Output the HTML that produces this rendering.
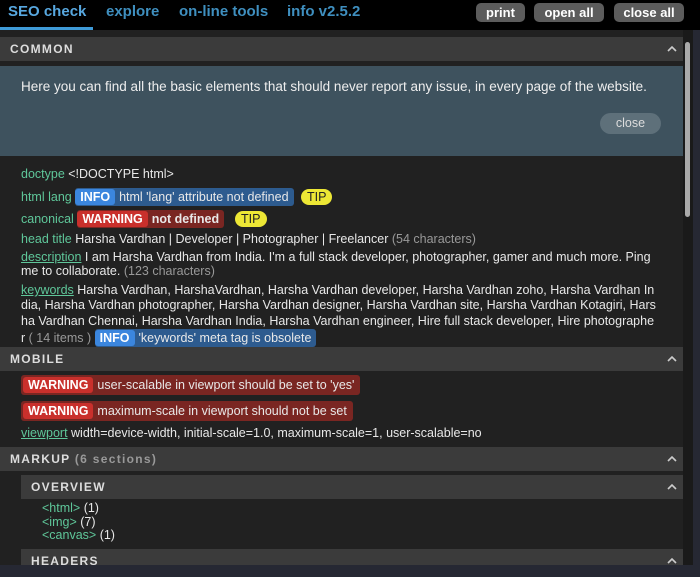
<!DOCTYPE html>
<html><head><style>
*{margin:0;padding:0;box-sizing:border-box}
body{width:700px;height:577px;overflow:hidden;background:#262833;font-family:"Liberation Sans",sans-serif;font-size:12.5px;color:#e8e8e8;position:relative}
.top{position:absolute;left:0;top:0;width:700px;height:30px;background:#000}
.tab{position:absolute;top:3px;font-size:15px;font-weight:bold;color:#3f8fbf}
.ul{position:absolute;left:0;top:27px;width:93px;height:3px;background:#3f9bd8}
.btn{position:absolute;top:3px;height:19px;background:#5c5c5c;color:#fff;border-radius:5px;font-weight:bold;font-size:13px;line-height:19px;text-align:center}
.panel{position:absolute;left:0;top:30px;width:683px;height:535px;background:#212121;overflow:hidden}
.sb{position:absolute;left:683px;top:30px;width:10px;height:535px;background:#1a1a1a}
.sb div{position:absolute;left:2px;top:12px;width:5px;height:175px;background:#aaa;border-radius:3px}
.hd{position:absolute;height:24px;background:#3b3b3b;font-size:12px;font-weight:bold;letter-spacing:1.3px;color:#ddd;line-height:24px;padding-left:10px}
.hd svg{position:absolute;right:6px;top:8px}
.row{position:absolute;left:21px;white-space:nowrap}
.g{color:#5fc79a}
.u{text-decoration:underline}
.gr{color:#999}
.b{display:inline-block;border-radius:3px;padding:1px 5px 1px 0;line-height:16px}
.bi{background:#2d5b8f}.bi i{background:#3b86de}
.bw{background:#7a2622}.bw i{background:#c9302c}
.b i{font-style:normal;font-weight:bold;display:inline-block;padding:0 5px;border-radius:3px;margin-right:4px;color:#fff}
.tip{display:inline-block;background:#ede735;color:#222;border-radius:9px;padding:0 6px;line-height:16px;margin-left:4px}
</style></head><body>
<div class="top">
<div class="tab" style="left:8px;color:#58a8e0">SEO check</div>
<div class="tab" style="left:106px">explore</div>
<div class="tab" style="left:179px">on-line tools</div>
<div class="tab" style="left:287px">info v2.5.2</div>
<div class="ul"></div>
<div class="btn" style="left:476px;width:49px">print</div>
<div class="btn" style="left:534px;width:70px">open all</div>
<div class="btn" style="left:614px;width:70px">close all</div>
</div>
<div class="panel">
<div class="hd" style="left:0;top:7px;width:683px">COMMON<svg width="10" height="7"><path d="M1 6L5 2L9 6" stroke="#ccc" stroke-width="1.6" fill="none"/></svg></div>
<div style="position:absolute;left:0;top:36px;width:683px;height:90px;background:#3e525e">
<div style="position:absolute;left:21px;top:13px;font-size:13.5px;color:#eee">Here you can find all the basic elements that should never report any issue, in every page of the website.</div>
<div style="position:absolute;left:600px;top:47px;width:61px;height:21px;border-radius:11px;background:#5e707a;color:#ddd;text-align:center;line-height:21px">close</div>
</div>
<div class="row" style="top:137px"><span class="g">doctype</span> &lt;!DOCTYPE html&gt;</div>
<div class="row" style="top:158px"><span class="g">html lang</span> <span class="b bi"><i>INFO</i>html 'lang' attribute not defined</span> <span class="tip">TIP</span></div>
<div class="row" style="top:180px"><span class="g">canonical</span> <span class="b bw"><i>WARNING</i><b>not defined</b></span> &nbsp;<span class="tip">TIP</span></div>
<div class="row" style="top:202px"><span class="g">head title</span> Harsha Vardhan | Developer | Photographer | Freelancer <span class="gr">(54 characters)</span></div>
<div class="row" style="top:221px;line-height:13.5px"><span class="g u">description</span> I am Harsha Vardhan from India. I'm a full stack developer, photographer, gamer and much more. Ping<br>me to collaborate. <span class="gr">(123 characters)</span></div>
<div class="row" style="top:253px;line-height:15.3px"><span class="g u">keywords</span> Harsha Vardhan, HarshaVardhan, Harsha Vardhan developer, Harsha Vardhan zoho, Harsha Vardhan In<br>dia, Harsha Vardhan photographer, Harsha Vardhan designer, Harsha Vardhan site, Harsha Vardhan Kotagiri, Hars<br>ha Vardhan Chennai, Harsha Vardhan India, Harsha Vardhan engineer, Hire full stack developer, Hire photographe<br>r <span class="gr">( 14 items )</span> <span class="b bi"><i>INFO</i>'keywords' meta tag is obsolete</span></div>
<div class="hd" style="left:0;top:317px;width:683px">MOBILE<svg width="10" height="7"><path d="M1 6L5 2L9 6" stroke="#ccc" stroke-width="1.6" fill="none"/></svg></div>
<div class="row" style="top:345px"><span class="b bw" style="padding:2px 6px 2px 2px"><i>WARNING</i>user-scalable in viewport should be set to 'yes'</span></div>
<div class="row" style="top:371px"><span class="b bw" style="padding:2px 6px 2px 2px"><i>WARNING</i>maximum-scale in viewport should not be set</span></div>
<div class="row" style="top:396px"><span class="g u">viewport</span> width=device-width, initial-scale=1.0, maximum-scale=1, user-scalable=no</div>
<div class="hd" style="left:0;top:417px;width:683px">MARKUP <span class="gr">(6 sections)</span><svg width="10" height="7"><path d="M1 6L5 2L9 6" stroke="#ccc" stroke-width="1.6" fill="none"/></svg></div>
<div class="hd" style="left:21px;top:445px;width:662px">OVERVIEW<svg width="10" height="7"><path d="M1 6L5 2L9 6" stroke="#ccc" stroke-width="1.6" fill="none"/></svg></div>
<div class="row" style="top:472px;left:42px;line-height:13.5px"><span class="g">&lt;html&gt;</span> (1)<br><span class="g">&lt;img&gt;</span> (7)<br><span class="g">&lt;canvas&gt;</span> (1)</div>
<div class="hd" style="left:21px;top:519px;width:662px">HEADERS<svg width="10" height="7"><path d="M1 6L5 2L9 6" stroke="#ccc" stroke-width="1.6" fill="none"/></svg></div>
</div>
<div class="sb"><div></div></div>
</body></html>
